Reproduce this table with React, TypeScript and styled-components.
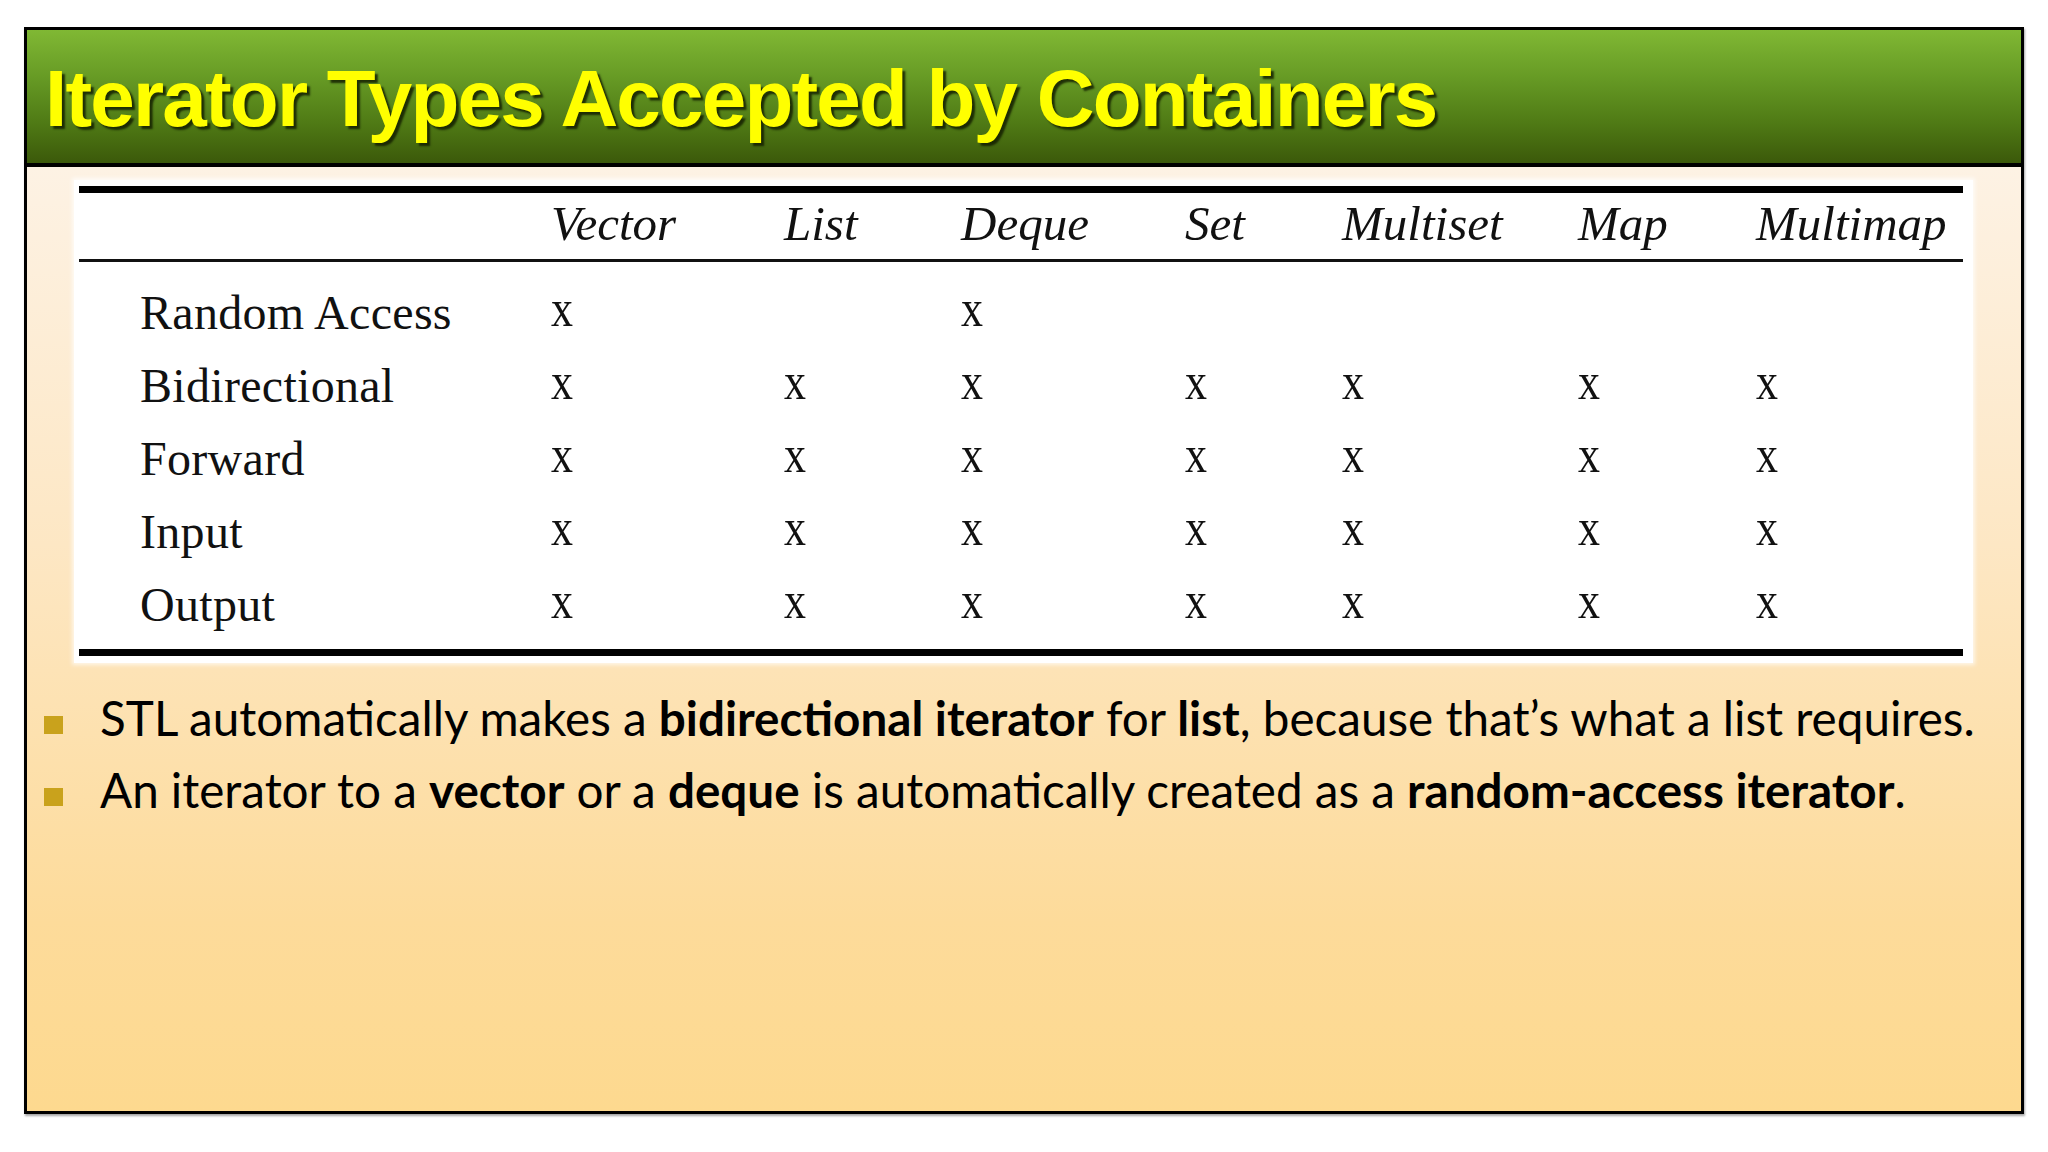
import React from "react";
import styled, { createGlobalStyle } from "styled-components";

const Global = createGlobalStyle`
  html, body { margin: 0; padding: 0; background: #ffffff; }
  body { width: 2048px; height: 1152px; overflow: hidden; }
`;

const Frame = styled.div`
  box-sizing: border-box;
  margin: 27px 0 0 24px;
  width: 2000px;
  height: 1087px;
  border: 3px solid #000;
  display: flex;
  flex-direction: column;
  box-shadow: 1px 2px 2px rgba(0, 0, 0, 0.35);
`;

const Header = styled.header`
  box-sizing: border-box;
  height: 137px;
  flex: none;
  border-bottom: 4px solid #000;
  background: linear-gradient(to bottom, #80b834 0%, #679b25 35%, #4f7a15 70%, #3b590a 100%);
  padding-left: 18px;
  display: flex;
  align-items: flex-start;
`;

const Title = styled.h1`
  margin: 0;
  padding-top: 23px;
  font-family: "Liberation Sans", Arial, sans-serif;
  font-weight: 700;
  font-size: 80px;
  line-height: 92px;
  letter-spacing: -1.8px;
  color: #ffff00;
  text-shadow: 3px 3px 2px rgba(20, 30, 0, 0.85);
`;

const Content = styled.main`
  flex: 1;
  background: linear-gradient(to bottom, #fdf2e4 0%, #fde7c4 40%, #fddb9a 80%, #fdd98f 100%);
  padding: 13px 0 0 0;
  display: flex;
  flex-direction: column;
`;

const TableBox = styled.div`
  box-sizing: border-box;
  margin-left: 47px;
  width: 1899px;
  height: 483px;
  background: #ffffff;
  padding: 6px 10px 7px 5px;
  box-shadow: 0 0 4px 2px rgba(255, 255, 255, 0.7);
`;

const Grid = styled.div`
  display: grid;
  grid-template-columns: 472px 233px 177px 224px 157px 236px 178px 207px;
  border-top: 7px solid #000;
  border-bottom: 7px solid #000;
`;

const HeadRow = styled.div`
  display: contents;
`;

const HeadCell = styled.div`
  height: 62px;
  padding-bottom: 4px;
  border-bottom: 3px solid #111;
  font-family: "Liberation Serif", "Times New Roman", serif;
  font-style: italic;
  font-size: 49px;
  line-height: 62px;
  color: #111;
  white-space: nowrap;
`;

const BodyCell = styled.div<{ $label?: boolean; $top?: boolean; $bottom?: boolean }>`
  height: 73px;
  margin-top: ${(p) => (p.$top ? "14px" : "0")};
  margin-bottom: ${(p) => (p.$bottom ? "8px" : "0")};
  padding-left: ${(p) => (p.$label ? "61px" : "0")};
  font-family: "Liberation Serif", "Times New Roman", serif;
  font-size: ${(p) => (p.$label ? "48px" : "44px")};
  line-height: 73px;
  color: #111;
  white-space: nowrap;
  letter-spacing: ${(p) => (p.$label ? "0.3px" : "0")};
`;

const Mark = styled.span`
  display: inline-block;
  transform: scaleY(1.2);
  transform-origin: 50% 80%;
`;

const Bullets = styled.ul`
  list-style: none;
  margin: 27px 0 0 17px;
  padding: 0;
  display: flex;
  flex-direction: column;
`;

const Bullet = styled.li`
  display: flex;
  align-items: flex-start;
  height: 72px;
  font-family: Lato, "Noto Sans", sans-serif;
  font-size: 47.6px;
  line-height: 56px;
  color: #000;
  white-space: nowrap;
`;

const Square = styled.span`
  flex: none;
  width: 19px;
  height: 18px;
  margin-top: 26px;
  margin-right: 37px;
  background: #c9a21c;
`;

const B = styled.b`
  font-weight: 700;
`;

const columns = ["Vector", "List", "Deque", "Set", "Multiset", "Map", "Multimap"];
const rows: { label: string; marks: boolean[] }[] = [
  { label: "Random Access", marks: [true, false, true, false, false, false, false] },
  { label: "Bidirectional", marks: [true, true, true, true, true, true, true] },
  { label: "Forward", marks: [true, true, true, true, true, true, true] },
  { label: "Input", marks: [true, true, true, true, true, true, true] },
  { label: "Output", marks: [true, true, true, true, true, true, true] },
];

export default function App() {
  return (
    <>
      <Global />
      <Frame>
        <Header>
          <Title>Iterator Types Accepted by Containers</Title>
        </Header>
        <Content>
          <TableBox>
            <Grid>
              <HeadRow>
                <HeadCell />
                {columns.map((c) => (
                  <HeadCell key={c}>{c}</HeadCell>
                ))}
              </HeadRow>
              {rows.map((r, i) => (
                <React.Fragment key={r.label}>
                  <BodyCell $label $top={i === 0} $bottom={i === rows.length - 1}>
                    {r.label}
                  </BodyCell>
                  {r.marks.map((m, j) => (
                    <BodyCell key={j} $top={i === 0} $bottom={i === rows.length - 1}>
                      {m ? <Mark>x</Mark> : null}
                    </BodyCell>
                  ))}
                </React.Fragment>
              ))}
            </Grid>
          </TableBox>
          <Bullets>
            <Bullet>
              <Square />
              <span>
                STL automatically makes a <B>bidirectional iterator</B> for <B>list</B>, because that’s what a list requires.
              </span>
            </Bullet>
            <Bullet>
              <Square />
              <span>
                An iterator to a <B>vector</B> or a <B>deque</B> is automatically created as a <B>random-access iterator</B>.
              </span>
            </Bullet>
          </Bullets>
        </Content>
      </Frame>
    </>
  );
}
